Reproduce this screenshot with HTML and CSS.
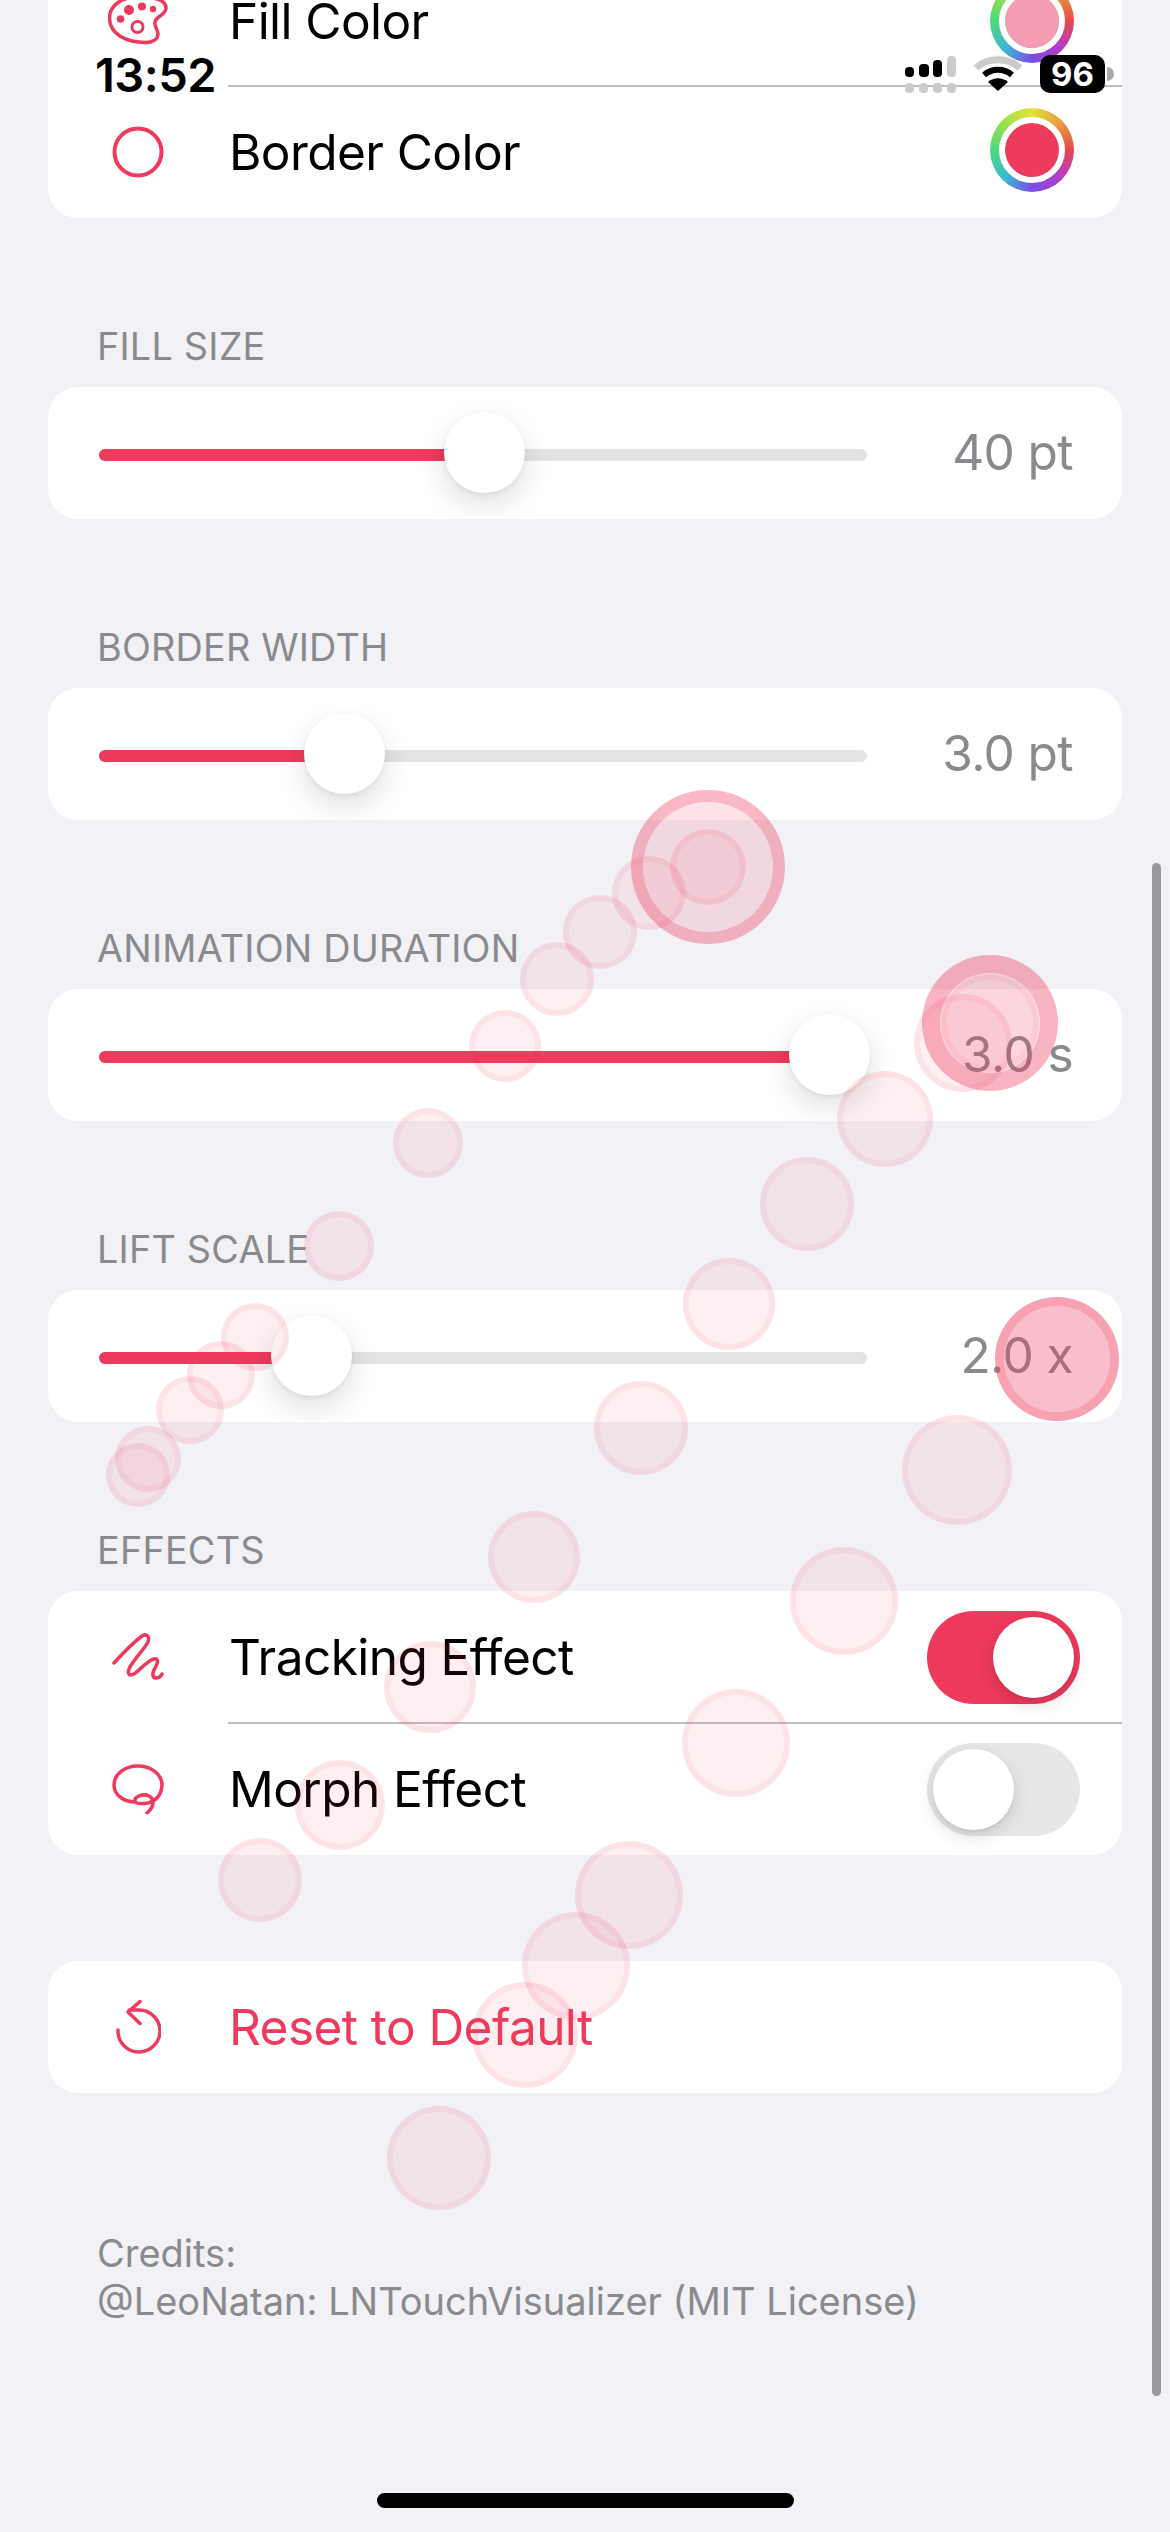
FILE: index.html
```html
<!DOCTYPE html>
<html lang="en">
<head>
    <meta charset="UTF-8">
    <meta name="viewport" content="width=device-width, initial-scale=1.0">
    <title>Touch Visualizer Settings</title>
    <link rel="stylesheet" href="styles.css">
</head>
<body>
    <main class="settings">
        <!-- Colors: scrolled partly under the top edge -->
        <div class="card card-colors">
            <div class="row row-first">
                <span class="row-icon">
                    <svg width="60" height="48" viewBox="0 0 60 48" fill="none">
                        <path class="line" stroke-width="3.5" d="M1.5 21C1.5 9 13 0 30 0C46 0 58 3 58 11C58 18 48 19 47 25C46 30 50 32 50 37C50 42 45 45.500 38 45.500C18 45.500 1.500 37 1.500 21Z"/>
                        <circle class="dot" cx="21" cy="13" r="5"/>
                        <circle class="dot" cx="34" cy="9.500" r="4"/>
                        <circle class="dot" cx="45" cy="12" r="3.200"/>
                        <circle class="dot" cx="12.500" cy="22" r="3.800"/>
                        <circle class="line" stroke-width="3" cx="29.500" cy="30" r="5.500"/>
                    </svg>
                </span>
                <span class="row-label">Fill Color</span>
                <span class="well"><span class="well-color well-pink"></span></span>
            </div>
            <div class="row">
                <span class="row-icon">
                    <svg width="54" height="54" viewBox="0 0 54 54" fill="none">
                        <circle class="line" stroke-width="4" cx="27" cy="27" r="23.500"/>
                    </svg>
                </span>
                <span class="row-label">Border Color</span>
                <span class="well well-low"><span class="well-color"></span></span>
            </div>
        </div>

        <section class="group">
            <h3 class="group-title">Fill Size</h3>
            <div class="card slider-row">
                <div class="track">
                    <div class="track-fill" style="width: 50.100%"><span class="thumb"></span></div>
                </div>
                <span class="slider-value">40 pt</span>
            </div>
        </section>

        <section class="group">
            <h3 class="group-title">Border Width</h3>
            <div class="card slider-row">
                <div class="track">
                    <div class="track-fill" style="width: 31.900%"><span class="thumb"></span></div>
                </div>
                <span class="slider-value">3.0 pt</span>
            </div>
        </section>

        <section class="group">
            <h3 class="group-title">Animation Duration</h3>
            <div class="card slider-row">
                <div class="track">
                    <div class="track-fill" style="width: 95%"><span class="thumb"></span></div>
                </div>
                <span class="slider-value">3.0 s</span>
            </div>
        </section>

        <section class="group">
            <h3 class="group-title">Lift Scale</h3>
            <div class="card slider-row">
                <div class="track">
                    <div class="track-fill" style="width: 27.600%"><span class="thumb"></span></div>
                </div>
                <span class="slider-value">2.0 x</span>
            </div>
        </section>

        <section class="group">
            <h3 class="group-title">Effects</h3>
            <div class="card">
                <div class="row">
                    <span class="row-icon">
                        <svg width="52" height="48" viewBox="0 0 52 48" fill="none">
                            <path class="line" stroke-width="3.500" d="M2 30C12 19 22 9 30 3C35 0 38 4 36 9C32 17 20 28 17 36C15 42 18 43 22 41C28 37 36 27 42 26C47 25 46 30 43 35C40 40 40 45 44 45C47 45 49 43 50 41"/>
                        </svg>
                    </span>
                    <span class="row-label">Tracking Effect</span>
                    <span class="switch switch-on"><span class="switch-knob"></span></span>
                </div>
                <div class="row">
                    <span class="row-icon">
                        <svg width="52" height="50" viewBox="0 0 52 50" fill="none">
                            <path class="line" stroke-width="3.500" d="M35 49C41 44 44 36 37 32C31 29 22 33 23 37C24 40 30 40 36 39C46 36 50 29 50 20C49 9 38 2 26 2C13 2 2 10 2 21C2 31 12 38 23 38"/>
                        </svg>
                    </span>
                    <span class="row-label">Morph Effect</span>
                    <span class="switch"><span class="switch-knob"></span></span>
                </div>
            </div>
        </section>

        <div class="card card-reset">
            <div class="row">
                <span class="row-icon">
                    <svg width="46" height="54" viewBox="0 0 46 54" fill="none">
                        <path class="line" stroke-width="3.500" d="M3 30A21 21 0 1 0 23 10H14M25 1.500L13 12L25 23.500"/>
                    </svg>
                </span>
                <span class="row-label row-label-red">Reset to Default</span>
            </div>
        </div>

        <p class="credits">Credits:<br>@LeoNatan: LNTouchVisualizer (MIT License)</p>
    </main>

    <!-- Touch trail, lying over the page -->
    <div class="touches">
        <span class="touch touch-strong" style="--x:708;--y:867;--r:77"></span>
        <span class="touch touch-mid" style="--x:708;--y:867;--r:38"></span>
        <span class="touch" style="--x:649;--y:893;--r:37"></span>
        <span class="touch" style="--x:600;--y:932;--r:37"></span>
        <span class="touch" style="--x:557;--y:979;--r:37"></span>
        <span class="touch" style="--x:505;--y:1046;--r:36"></span>
        <span class="touch" style="--x:428;--y:1143;--r:35"></span>
        <span class="touch" style="--x:339;--y:1246;--r:35"></span>
        <span class="touch" style="--x:255;--y:1337;--r:34"></span>
        <span class="touch" style="--x:221;--y:1375;--r:34"></span>
        <span class="touch" style="--x:190;--y:1410;--r:34"></span>
        <span class="touch" style="--x:148;--y:1459;--r:33"></span>
        <span class="touch" style="--x:138;--y:1475;--r:32"></span>

        <span class="touch touch-strong touch-strong-thin" style="--x:990;--y:1023;--r:68"></span>
        <span class="touch touch-mid" style="--x:990;--y:1023;--r:49"></span>
        <span class="touch touch-mid" style="--x:963;--y:1043;--r:49"></span>
        <span class="touch" style="--x:885;--y:1119;--r:48"></span>
        <span class="touch" style="--x:807;--y:1204;--r:47"></span>
        <span class="touch" style="--x:729;--y:1304;--r:46"></span>
        <span class="touch" style="--x:641;--y:1428;--r:47"></span>
        <span class="touch" style="--x:534;--y:1557;--r:46"></span>
        <span class="touch" style="--x:430;--y:1687;--r:46"></span>
        <span class="touch" style="--x:340;--y:1805;--r:45"></span>
        <span class="touch" style="--x:260;--y:1880;--r:42"></span>

        <span class="touch touch-press" style="--x:1057;--y:1359;--r:62"></span>
        <span class="touch" style="--x:957;--y:1470;--r:55"></span>
        <span class="touch" style="--x:844;--y:1601;--r:54"></span>
        <span class="touch" style="--x:736;--y:1743;--r:54"></span>
        <span class="touch" style="--x:629;--y:1895;--r:54"></span>
        <span class="touch" style="--x:576;--y:1966;--r:54"></span>
        <span class="touch" style="--x:525;--y:2035;--r:53"></span>
        <span class="touch" style="--x:439;--y:2158;--r:52"></span>
    </div>

    <div class="status-bar">
        <span class="status-time">13:52</span>
        <span class="status-right">
            <svg width="52" height="38" viewBox="0 0 52 38">
                <rect x="0" y="12" width="9" height="10" rx="4"/>
                <rect x="14" y="9" width="10" height="13" rx="4"/>
                <rect x="28" y="5" width="9" height="17" rx="4"/>
                <rect class="ghost" x="42" y="1" width="9" height="21" rx="4"/>
                <rect class="ghost" x="0" y="28" width="9" height="10" rx="4"/>
                <rect class="ghost" x="14" y="28" width="9" height="10" rx="4"/>
                <rect class="ghost" x="28" y="28" width="9" height="10" rx="4"/>
                <rect class="ghost" x="42" y="28" width="9" height="10" rx="4"/>
            </svg>
            <svg class="wifi" width="50" height="38" viewBox="0 0 50 38" fill="none">
                <path class="wifi-ghost" d="M3 13C15 2 35 2 47 13"/>
                <path class="wifi-arc" d="M11 20C19 13 31 13 39 20"/>
                <path class="wifi-tip" d="M25 36L15 27C21 22 29 22 35 27Z"/>
            </svg>
            <span class="battery">96</span>
            <span class="battery-nib"></span>
        </span>
    </div>

    <div class="scroll-thumb"></div>
    <div class="home-bar"></div>
</body>
</html>
```

FILE: styles.css
```css
* {
    box-sizing: border-box;
}

html, body {
    height: 2532px;
}

body {
    margin: 0;
    position: relative;
    overflow: hidden;
    background-color: #F1F1F6;
    color: #000;
    font-family: Inter, "Noto Sans", sans-serif;
}

.settings {
    margin-top: -44px;
    padding: 0 48px;
}

.card {
    background-color: #FFF;
    border-radius: 30px;
    overflow: hidden;
}

/* Rows */
.row {
    display: flex;
    align-items: center;
    height: 132px;
    padding: 0 42px 0 60px;
}

.row + .row {
    position: relative;
}

.row + .row::before {
    content: "";
    position: absolute;
    left: 180px;
    right: 0;
    top: -1px;
    height: 2px;
    background-color: #BEBEC1;
}

.row-first {
    height: 130px;
}

.row-icon {
    display: flex;
    justify-content: center;
    flex: none;
    width: 60px;
    margin-right: 61px;
}

.row-label {
    flex: 1;
    font-size: 49.6px;
    letter-spacing: -0.6px;
}

.row-label-red {
    color: #EE3A5C;
}

.line {
    stroke: #EE3A5C;
    stroke-linecap: round;
    stroke-linejoin: round;
}

.dot {
    fill: #EE3A5C;
}

/* Color wells */
.well {
    display: flex;
    align-items: center;
    justify-content: center;
    flex: none;
    width: 84px;
    height: 84px;
    margin-right: 6px;
    border-radius: 50%;
    background: conic-gradient(#E2E23C, #E9A03F 12%, #E5484C 25%, #B53CCB 37%, #7A4DE2 50%, #3CB8D8 62%, #4FD97C 75%, #9BE04C 87%, #E2E23C);
}

.well-low {
    margin-top: -4px;
}

.well-color {
    width: 66px;
    height: 66px;
    border: 6px solid #FFF;
    border-radius: 50%;
    background-color: #EE3A5C;
    background-clip: padding-box;
}

.well-pink {
    background-color: #F49DB0;
}

/* Groups */
.group {
    margin-top: 103px;
}

.group-title {
    margin: 0 0 18px 49px;
    padding-top: 2px;
    font-size: 37.8px;
    line-height: 46px;
    font-weight: 400;
    letter-spacing: 0.2px;
    text-transform: uppercase;
    color: #8A8A8E;
}

/* Sliders */
.slider-row {
    display: flex;
    align-items: center;
    height: 132px;
    padding: 4px 49px 0 51px;
}

.track {
    flex: none;
    width: 768px;
    height: 12px;
    border-radius: 6px;
    background-color: #E3E3E4;
}

.track-fill {
    position: relative;
    height: 100%;
    border-radius: 6px;
    background-color: #EE3A5C;
}

.thumb {
    position: absolute;
    right: -41px;
    top: -37px;
    width: 81px;
    height: 81px;
    border-radius: 50%;
    background-color: #FFF;
    box-shadow: 0 12px 30px rgba(0, 0, 0, 0.13), 0 2px 5px rgba(0, 0, 0, 0.06);
}

.slider-value {
    flex: 1;
    margin-top: -6px;
    text-align: right;
    font-size: 49.6px;
    letter-spacing: -0.6px;
    color: #8A8A8E;
}

/* Switches */
.switch {
    display: flex;
    flex: none;
    width: 153px;
    height: 93px;
    padding: 6px;
    border-radius: 47px;
    background-color: #E7E7E8;
}

.switch-on {
    justify-content: flex-end;
    background-color: #EE3A5C;
}

.switch-knob {
    width: 81px;
    height: 81px;
    border-radius: 50%;
    background-color: #FFF;
    box-shadow: 0 6px 18px rgba(0, 0, 0, 0.14), 0 2px 3px rgba(0, 0, 0, 0.06);
}

.card-reset {
    margin-top: 106px;
}

.credits {
    margin: 136px 0 0 49px;
    font-size: 38px;
    line-height: 48px;
    color: #8A8A8E;
}

/* Touch trail */
.touches {
    position: absolute;
    inset: 0;
    pointer-events: none;
}

.touch {
    position: absolute;
    left: calc((var(--x) - var(--r)) * 1px);
    top: calc((var(--y) - var(--r)) * 1px);
    width: calc(var(--r) * 2px);
    height: calc(var(--r) * 2px);
    border: 6px solid rgba(238, 58, 92, 0.14);
    border-radius: 50%;
    background-color: rgba(238, 58, 92, 0.08);
    background-clip: padding-box;
}

.touch-mid {
    border-color: rgba(238, 58, 92, 0.14);
    background-color: rgba(238, 58, 92, 0.08);
}

.touch-strong {
    border-width: 12px;
    border-color: rgba(238, 58, 92, 0.36);
    background-color: rgba(238, 58, 92, 0.14);
}

.touch-strong-thin {
    border-width: 18px;
    border-color: rgba(238, 58, 92, 0.38);
}

.touch-press {
    border-width: 9px;
    border-color: rgba(238, 58, 92, 0.48);
    background-color: rgba(238, 58, 92, 0.33);
}

/* Status bar */
.status-bar {
    position: absolute;
    top: 55px;
    left: 95px;
    right: 56px;
    display: flex;
    justify-content: space-between;
    align-items: flex-start;
}

.status-time {
    font-size: 47px;
    line-height: 40px;
    font-weight: 600;
    letter-spacing: -0.5px;
}

.status-right {
    display: flex;
    align-items: flex-start;
}

.wifi {
    margin: 0 17px 0 16px;
}

.wifi-ghost {
    stroke: #CBCBCB;
    stroke-width: 7px;
}

.wifi-arc {
    stroke: #000;
    stroke-width: 6px;
}

.wifi-tip {
    fill: #000;
}

.ghost {
    fill: #CBCBCB;
}

.battery {
    width: 65px;
    height: 38px;
    border-radius: 10px;
    background-color: #000;
    color: #FFF;
    font-size: 33px;
    line-height: 38px;
    font-weight: 700;
    text-align: center;
}

.battery-nib {
    width: 7px;
    height: 14px;
    margin: 12px 0 0 2px;
    border-radius: 0 7px 7px 0;
    background-color: #AAAAAC;
}

/* Scroll indicator and home bar */
.scroll-thumb {
    position: absolute;
    left: 1152px;
    top: 863px;
    width: 9px;
    height: 1533px;
    border-radius: 5px;
    background-color: #9A9A9C;
}

.home-bar {
    position: absolute;
    left: 377px;
    top: 2493px;
    width: 417px;
    height: 15px;
    border-radius: 8px;
    background-color: #000;
}
```
